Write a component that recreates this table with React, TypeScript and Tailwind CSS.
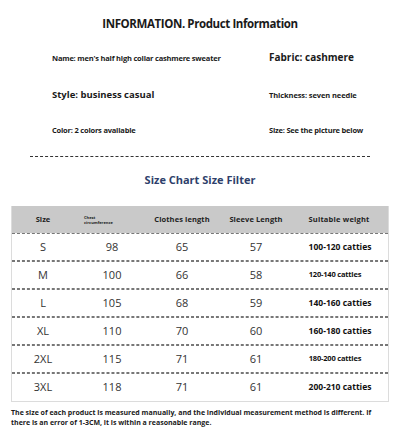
const rows = [
  { size: "S", chest: "98", length: "65", sleeve: "57", weight: "100-120 catties", big: true },
  { size: "M", chest: "100", length: "66", sleeve: "58", weight: "120-140 catties", big: false },
  { size: "L", chest: "105", length: "68", sleeve: "59", weight: "140-160 catties", big: true },
  { size: "XL", chest: "110", length: "70", sleeve: "60", weight: "160-180 catties", big: true },
  { size: "2XL", chest: "115", length: "71", sleeve: "61", weight: "180-200 catties", big: false },
  { size: "3XL", chest: "118", length: "71", sleeve: "61", weight: "200-210 catties", big: true },
];

const App = () => {
  return (
    <div
      className="w-[400px] h-[435px] bg-white text-[#1a1a1a] overflow-hidden"
      style={{ fontFamily: '"Open Sans", "Liberation Sans", sans-serif' }}
    >
      {/* Title */}
      <h1 className="pt-[15px] text-center text-[11.5px] font-bold leading-[18px] tracking-[-0.4px]">
        INFORMATION. Product Information
      </h1>

      {/* Info grid */}
      <div className="grid grid-cols-[217px_1fr] pl-[52px] mt-[19px] font-bold">
        <div className="h-[37px] text-[7.5px] leading-[12px] tracking-[-0.2px]">
          Name: men's half high collar cashmere sweater
        </div>
        <div className="h-[37px] text-[10px] leading-[12px] -mt-[1px]">Fabric: cashmere</div>
        <div className="h-[35px] text-[9.5px] leading-[12px]">Style: business casual</div>
        <div className="h-[35px] text-[7.5px] leading-[12px] tracking-[-0.1px]">Thickness: seven needle</div>
        <div className="text-[7.5px] leading-[12px] tracking-[-0.2px]">Color: 2 colors available</div>
        <div className="text-[7.5px] leading-[12px] tracking-[-0.2px]">Size: See the picture below</div>
      </div>

      {/* Divider */}
      <div className="mx-[30px] mt-[20px] border-t border-dashed border-[#333]" />

      <h2 className="mt-[16px] text-center text-[11px] font-bold leading-[14px] text-[#2f3f6b]">
        Size Chart Size Filter
      </h2>

      {/* Table */}
      <div className="mx-[11px] mt-[19px] border border-[#dcdcdc] border-t-0">
        <div className="grid grid-cols-[60px_72px_76px_72px_1fr] h-[27px] items-center bg-[#c9c9c9] font-bold text-[#222]">
          <div className="text-center text-[7.5px] pl-[2px]">Size</div>
          <div className="pl-[12px] text-[4px] leading-[5px]">
            Chest
            <br />
            circumference
          </div>
          <div className="text-center text-[7.5px] tracking-[0.1px]">Clothes length</div>
          <div className="text-center text-[7.5px] tracking-[0.1px]">Sleeve Length</div>
          <div className="text-center text-[7.5px] tracking-[0.2px] pr-[2px]">Suitable weight</div>
        </div>
        {rows.map((r, i) => (
          <div
            key={r.size}
            className={
              "grid grid-cols-[60px_72px_76px_72px_1fr] h-[28px] items-center text-[#333] border-dashed border-[#777] " +
              (i < rows.length - 1 ? "border-y" : "border-t")
            }
          >
            <div className="text-center text-[11px] pl-[2px]">{r.size}</div>
            <div className="text-center text-[11px] pl-[8px]">{r.chest}</div>
            <div className="text-center text-[11px]">{r.length}</div>
            <div className="text-center text-[11px]">{r.sleeve}</div>
            <div
              className={
                "text-center font-bold text-[#111] " +
                (r.big ? "text-[8.5px]" : "text-[7.5px] -ml-[10px] tracking-[-0.2px]")
              }
            >
              {r.weight}
            </div>
          </div>
        ))}
      </div>

      {/* Note */}
      <p className="mt-[6px] px-[11px] text-[7px] font-bold leading-[10px]">
        The size of each product is measured manually, and the individual measurement method is different. If
        there is an error of 1-3CM, it is within a reasonable range.
      </p>
    </div>
  );
};

export default App;
